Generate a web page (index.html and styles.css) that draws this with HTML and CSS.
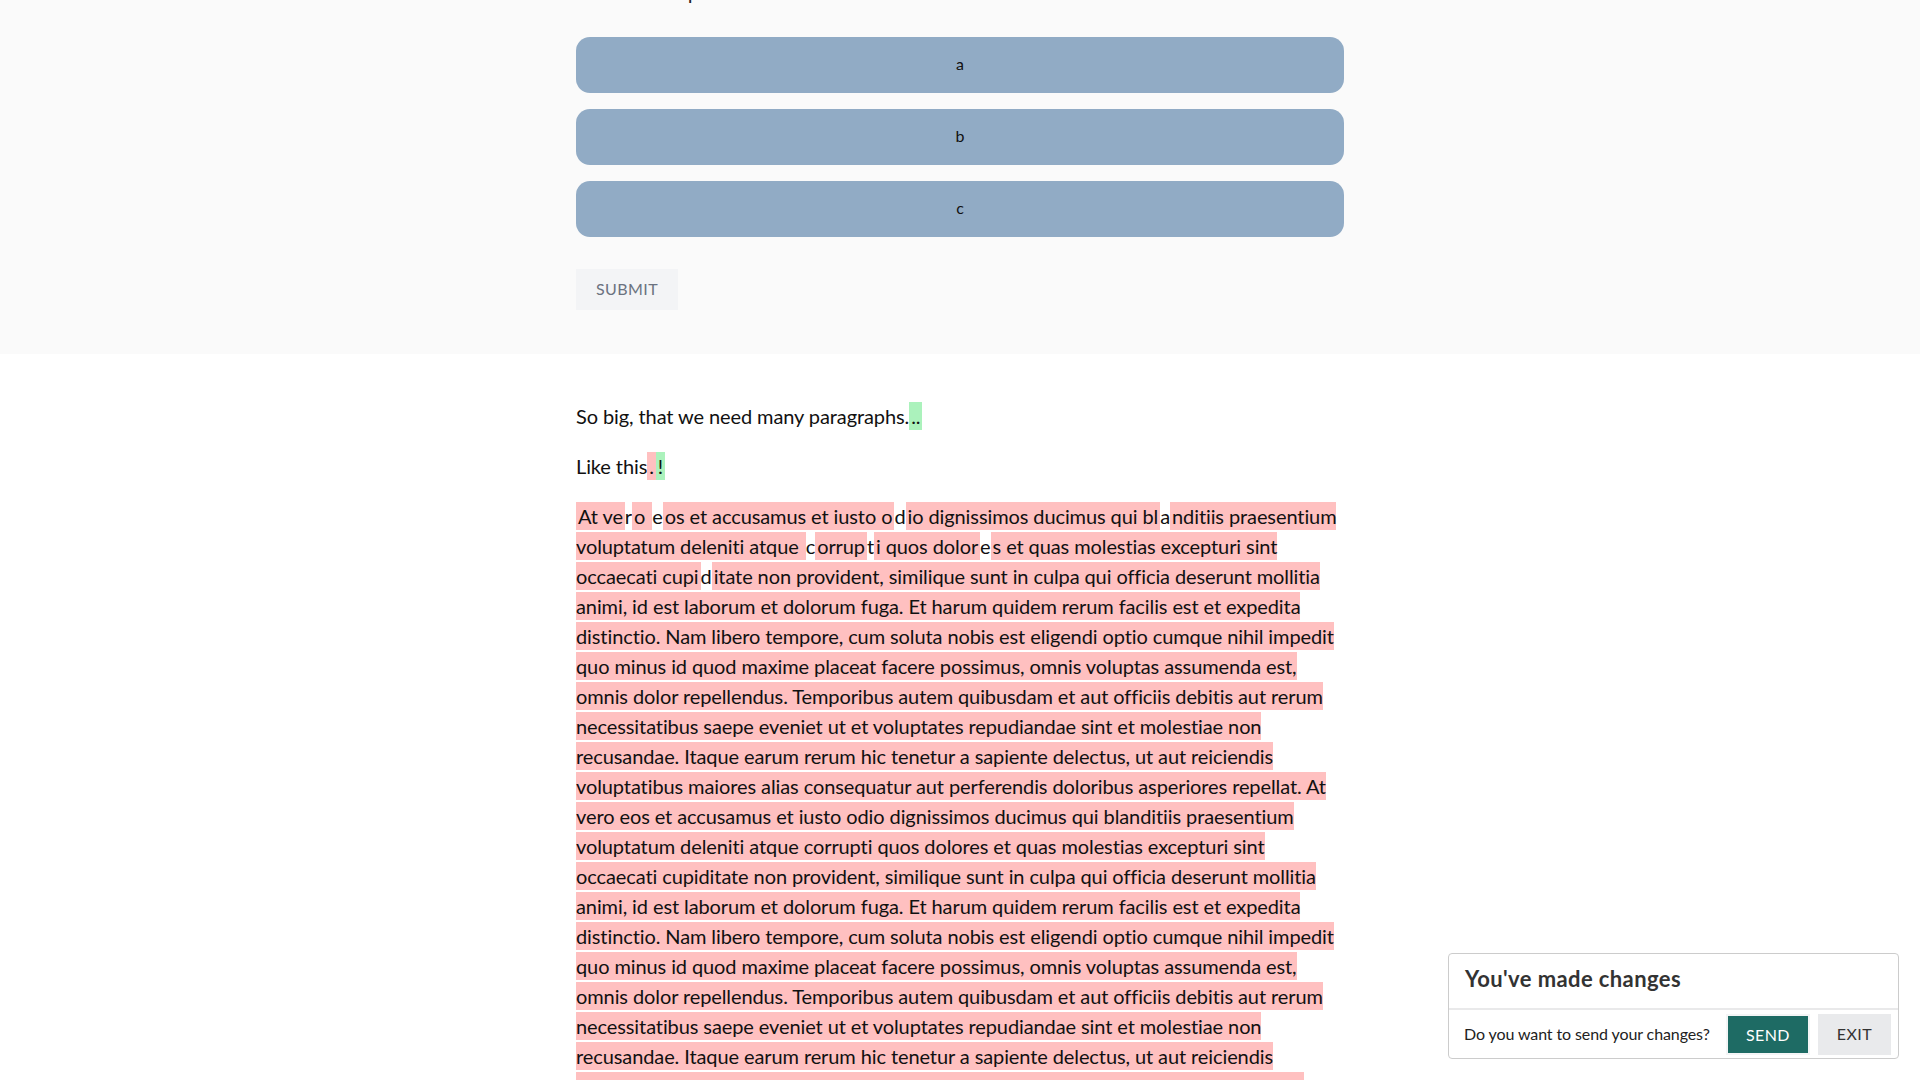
FILE: index.html
```html
<!DOCTYPE html>
<html lang="en">
<head>
<meta charset="utf-8">
<title>Review changes</title>
<link rel="stylesheet" href="styles.css">
</head>
<body>
<section class="quiz">
  <div class="container">
    <p class="question">What is the question?</p>
    <div class="options">
      <button class="option">a</button>
      <button class="option">b</button>
      <button class="option">c</button>
    </div>
    <button class="submit">Submit</button>
  </div>
</section>

<main class="content container">
  <p>So big, that we need many paragraphs.<span class="ins">..</span></p>
  <p>Like this<span class="del">.</span><span class="ins">!</span></p>
  <p><span class="del">At ve</span>r<span class="del">o </span>e<span class="del">os et accusamus et iusto o</span>d<span class="del">io dignissimos ducimus qui bl</span>a<span class="del">nditiis praesentium voluptatum deleniti atque </span>c<span class="del">orrup</span>t<span class="del">i quos dolor</span>e<span class="del">s et quas molestias excepturi sint occaecati cupi</span>d<span class="del">itate non provident, similique sunt in culpa qui officia deserunt mollitia animi, id est laborum et dolorum fuga. Et harum quidem rerum facilis est et expedita distinctio. Nam libero tempore, cum soluta nobis est eligendi optio cumque nihil impedit quo minus id quod maxime placeat facere possimus, omnis voluptas assumenda est, omnis dolor repellendus. Temporibus autem quibusdam et aut officiis debitis aut rerum necessitatibus saepe eveniet ut et voluptates repudiandae sint et molestiae non recusandae. Itaque earum rerum hic tenetur a sapiente delectus, ut aut reiciendis voluptatibus maiores alias consequatur aut perferendis doloribus asperiores repellat. At vero eos et accusamus et iusto odio dignissimos ducimus qui blanditiis praesentium voluptatum deleniti atque corrupti quos dolores et quas molestias excepturi sint occaecati cupiditate non provident, similique sunt in culpa qui officia deserunt mollitia animi, id est laborum et dolorum fuga. Et harum quidem rerum facilis est et expedita distinctio. Nam libero tempore, cum soluta nobis est eligendi optio cumque nihil impedit quo minus id quod maxime placeat facere possimus, omnis voluptas assumenda est, omnis dolor repellendus. Temporibus autem quibusdam et aut officiis debitis aut rerum necessitatibus saepe eveniet ut et voluptates repudiandae sint et molestiae non recusandae. Itaque earum rerum hic tenetur a sapiente delectus, ut aut reiciendis voluptatibus maiores alias consequatur aut perferendis doloribus asperiores repellat.</span></p>
</main>

<div class="toast" role="dialog" aria-label="Unsaved changes">
  <div class="toast-head">You've made changes</div>
  <div class="toast-body">
    <span class="toast-text">Do you want to send your changes?</span>
    <button class="btn btn-send">Send</button>
    <button class="btn btn-exit">Exit</button>
  </div>
</div>
</body>
</html>
```

FILE: styles.css
```css
* { box-sizing: border-box; }

html, body {
  margin: 0;
  padding: 0;
}

body {
  background: #ffffff;
  color: #111111;
  font-family: "Lato", "Liberation Sans", sans-serif;
  font-size: 20px;
  line-height: 30px;
  letter-spacing: -0.1px;
}

.container {
  width: 768px;
  margin: 0 auto;
}

.quiz {
  background: #fafafa;
  padding-bottom: 44px;
}

.question {
  margin: -23px 0 0;
  height: 30px;
  color: #222;
}

.options {
  display: flex;
  flex-direction: column;
  gap: 16px;
  margin-top: 30px;
}

.option {
  display: block;
  width: 100%;
  height: 56px;
  padding: 0 0 4px;
  border: none;
  border-radius: 14px;
  background: #91abc5;
  color: #111;
  font-family: "Lato", "Liberation Sans", sans-serif;
  font-size: 16px;
  cursor: pointer;
}

.submit {
  margin-top: 32px;
  height: 41px;
  padding: 0 20px 2px;
  border: none;
  background: #f3f4f6;
  color: #6b7280;
  font-family: "Lato", "Liberation Sans", sans-serif;
  font-size: 16px;
  letter-spacing: 0.4px;
  text-transform: uppercase;
  cursor: pointer;
}

.content {
  padding-top: 27px;
}

.content p {
  margin: 20px 0;
}

.ins, .del {
  padding: 2px 2px;
}

.ins { background: #abf2bc; }
.del { background: #ffc0c0; }

.toast {
  position: fixed;
  right: 21px;
  bottom: 21px;
  width: 451px;
  background: #fff;
  border: 1px solid #cccccc;
  border-radius: 4px;
}

.toast-head {
  height: 56px;
  padding: 7px 16px 0;
  font-family: "Lato", "Liberation Sans", sans-serif;
  font-weight: 700;
  font-size: 22px;
  line-height: 36px;
  letter-spacing: 0.4px;
  color: #333;
  border-bottom: 2px solid #e9e9ea;
}

.toast-body {
  display: flex;
  align-items: center;
  gap: 8px;
  padding: 4px 7px 3px 15px;
}

.toast-text {
  flex: 1;
  font-size: 16px;
  line-height: 20px;
  padding-bottom: 2px;
  color: #222;
}

.btn {
  height: 41px;
  padding: 0 18px 2px;
  border: none;
  font-family: "Lato", "Liberation Sans", sans-serif;
  font-size: 16px;
  letter-spacing: 0.4px;
  text-transform: uppercase;
  cursor: pointer;
}

.btn-send {
  background: #1e6b64;
  color: #fff;
  border: 2px solid #f4f5f6;
  padding: 0 18px 1px;
}

.btn-exit {
  background: #e9eaec;
  color: #333;
  padding: 0 19px 2px;
}
```
